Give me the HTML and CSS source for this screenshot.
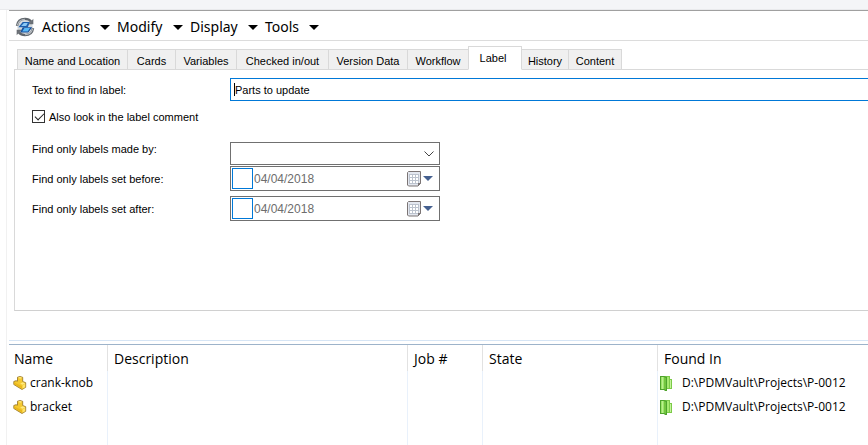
FILE: index.html
```html
<!DOCTYPE html>
<html lang="en">
<head>
<meta charset="utf-8">
<title>Search</title>
<link rel="stylesheet" href="styles.css">
</head>
<body>
<svg class="defs" aria-hidden="true">
  <symbol id="part" viewBox="0 0 14 14">
    <path d="M4.500 1.200 7 .5l2.700.8v4.200l3 1.200v4.600L9 13.500.8 8.500V5.500L3 4.700l1.500.5z" fill="#f5c930" stroke="#94711f" stroke-width=".8"/>
    <path d="M5 1.600 7 1l2.200.8-2 .9zM7.200 7.700l2.300-1.400 2.800 1-2.600 1.500z" fill="#ffea80"/>
    <path d="M9.600 9.600l2.600-1.500v3l-2.600 1.700z" fill="#ffe36a"/>
    <path d="M1.300 6.500 6 8.800l3 1.200v2.600L1.300 8.200z" fill="#e9b71c"/>
  </symbol>
  <symbol id="folder" viewBox="0 0 14 16">
    <path d="M5 1h6v3h2v10H5z" fill="#7cca48"/>
    <path d="M6 2h4v11H6z" fill="#a6ea70"/>
    <path d="M11 5h1v8h-1z" fill="#c4f49c"/>
    <path d="M1 1h4l3 1v14H6l-1-1H1z" fill="#4ea32c"/>
    <path d="M2 2h3v12H2z" fill="#9de368"/>
    <path d="M5 2l2 1v12l-2-1z" fill="#72c540"/>
    <path d="M3 2h1v12H3z" fill="#b9f08e"/>
  </symbol>
  <symbol id="calendar" viewBox="0 0 15 16">
    <path d="M1.500.5h12v12l-2.500 2.500H1.500l-1-1V1.500z" fill="#e3e7ef" stroke="#7b7474"/>
    <path d="M2 3h10v10H2z" fill="#bcc3ce"/>
    <path d="M3 4h2v2H3zM6 4h2v2H6zM9 4h2v2H9zM3 7h2v2H3zM6 7h2v2H6zM9 7h2v2H9zM3 10h2v2H3zM6 10h2v2H6zM9 10h2v2H9z" fill="#fff"/>
    <path d="M11 15v-3h3z" fill="#7b7474"/>
  </symbol>
</svg>

<div class="strip"></div>
<main class="window">
  <nav class="toolbar">
    <svg class="logo" viewBox="0 0 18 18" aria-hidden="true">
      <circle cx="9" cy="9" r="7" fill="#d3d8dc"/>
      <path d="M3 9.200 7 4.500h6.500l-2 4.700z" fill="#1c5fae"/>
      <path d="M5.500 8 8 5.500h3.500L10 8z" fill="#8ac8f5"/>
      <path d="M7 9.200h8.500L12 14H4.500z" fill="#164f9d"/>
      <path d="M8.500 10h5L11.500 13H6.500z" fill="#58b8f5"/>
      <path d="M1.800 8C2.300 4 5 1.700 9 1.700c2.500 0 4.300.8 5.500 2.300M16.200 10c-.5 4-3.200 6.300-7.200 6.300-2.500 0-4.300-.8-5.500-2.300" fill="none" stroke="#60666c" stroke-width="2.200"/>
      <path d="M2 7.500C3 4 5.500 2 9 2M16 10.500c-1 3.500-3.500 5.500-7 5.500" fill="none" stroke="#b9bec3" stroke-width="1"/>
      <path d="M16.500 1.500v5h-4.500zM1.500 16.500v-5H6z" fill="#6a6f75"/>
    </svg>
    <button class="menu menu-actions">Actions</button>
    <button class="menu menu-modify">Modify</button>
    <button class="menu menu-display">Display</button>
    <button class="menu">Tools</button>
  </nav>

  <section class="search">
    <div class="tabs" role="tablist">
      <button class="tab tab-name" role="tab">Name and Location</button>
      <button class="tab tab-cards" role="tab">Cards</button>
      <button class="tab tab-variables" role="tab">Variables</button>
      <button class="tab tab-checked" role="tab">Checked in/out</button>
      <button class="tab tab-version" role="tab">Version Data</button>
      <button class="tab tab-workflow" role="tab">Workflow</button>
      <button class="tab tab-label active" role="tab" aria-selected="true">Label</button>
      <button class="tab tab-history" role="tab">History</button>
      <button class="tab tab-content" role="tab">Content</button>
    </div>
    <form class="panel">
      <div class="row">
        <label class="caption" for="text">Text to find in label:</label>
        <div class="textbox"><span class="caret"></span><input id="text" type="text" value="Parts to update"></div>
      </div>
      <div class="check-row">
        <input class="tick" id="comment" type="checkbox" checked>
        <label for="comment">Also look in the label comment</label>
      </div>
      <div class="row select-row">
        <label class="caption" for="by">Find only labels made by:</label>
        <div class="select">
          <select id="by"><option></option></select>
          <svg class="chevron" viewBox="0 0 10 6" aria-hidden="true"><path d="M.5.5 5 5 9.500.5" fill="none" stroke="#444"/></svg>
        </div>
      </div>
      <div class="row date-row">
        <label class="caption" for="before">Find only labels set before:</label>
        <div class="date">
          <input class="enable" type="checkbox" aria-label="Use before date">
          <input class="value" id="before" type="text" value="04/04/2018">
          <button class="pick" type="button" aria-label="Pick before date"><svg><use href="#calendar"/></svg></button>
        </div>
      </div>
      <div class="row date-row">
        <label class="caption" for="after">Find only labels set after:</label>
        <div class="date">
          <input class="enable" type="checkbox" aria-label="Use after date">
          <input class="value" id="after" type="text" value="04/04/2018">
          <button class="pick" type="button" aria-label="Pick after date"><svg><use href="#calendar"/></svg></button>
        </div>
      </div>
    </form>
  </section>

  <div class="splitter"></div>
  <table class="results">
    <colgroup><col class="c-name"><col class="c-desc"><col class="c-job"><col class="c-state"><col></colgroup>
    <thead>
      <tr><th>Name</th><th>Description</th><th>Job #</th><th>State</th><th>Found In</th></tr>
    </thead>
    <tbody>
      <tr>
        <td><span class="item"><svg class="part"><use href="#part"/></svg>crank-knob</span></td><td></td><td></td><td></td>
        <td><span class="item place"><svg class="folder"><use href="#folder"/></svg>D:\PDMVault\Projects\P-0012</span></td>
      </tr>
      <tr>
        <td><span class="item"><svg class="part"><use href="#part"/></svg>bracket</span></td><td></td><td></td><td></td>
        <td><span class="item place"><svg class="folder"><use href="#folder"/></svg>D:\PDMVault\Projects\P-0012</span></td>
      </tr>
      <tr class="rest"><td></td><td></td><td></td><td></td><td></td></tr>
    </tbody>
  </table>
</main>
</body>
</html>
```
FILE: styles.css
```css
* { box-sizing: border-box; }

body {
  margin: 0;
  min-height: 100vh;
  display: flex;
  flex-direction: column;
  background: #fff;
  color: #000;
  font: 11px/14px "Liberation Sans", Arial, sans-serif;
  overflow: hidden;
}

button, input, select {
  font: inherit;
  color: inherit;
  margin: 0;
  padding: 0;
  border: 0;
  background: none;
  outline: none;
}

.defs { position: absolute; width: 0; height: 0; }

.strip {
  height: 10px;
  background: #f4f5f7;
  border-bottom: 1px solid #e9eaec;
}

.window {
  flex: 1;
  display: flex;
  flex-direction: column;
  margin-left: 6px;
  border-left: 1px solid #f1f1f1;
  padding-left: 2px;
}

.toolbar {
  display: flex;
  align-items: center;
  height: 31px;
  padding: 3px 0 0 6px;
  border-top: 1px solid #a0a0a0;
  border-bottom: 1px solid #dcdcdc;
  font: 14px/20px "Noto Sans", "Segoe UI", sans-serif;
}

.logo { width: 20px; height: 20px; margin-right: 7px; }

.menu {
  display: flex;
  align-items: center;
  justify-content: space-between;
  width: 68px;
  margin-right: 7px;
}
.menu::after {
  content: "";
  border: 5px solid transparent;
  border-top-color: #000;
  border-bottom: 0;
}
.menu-modify { width: 66px; }
.menu-display { width: 68px; }
.menu:last-child { width: 54px; }

.search { padding: 5px 0 0 5px; }

.tabs {
  display: flex;
  align-items: flex-end;
  height: 24px;
  padding-left: 3px;
  position: relative;
  z-index: 1;
}
.tab {
  height: 21px;
  padding-top: 3px;
  border: 1px solid #d9d9d9;
  border-right: 0;
  background: #f0f0f0;
  white-space: nowrap;
}
.tab-name { width: 110px; }
.tab-cards { width: 48px; }
.tab-variables { width: 61px; }
.tab-checked { width: 92px; }
.tab-version { width: 79px; }
.tab-workflow { width: 61px; }
.tab-label { width: 54px; }
.tab-history { width: 46px; border-left: 0; }
.tab-content { width: 54px; border-right: 1px solid #d9d9d9; }
.tab.active {
  height: 24px;
  padding: 0 4px 0 0;
  border-right: 1px solid #d9d9d9;
  border-bottom-color: #fff;
  background: #fff;
}

.panel {
  height: 242px;
  margin-top: -1px;
  padding: 8px 0 0 17px;
  border: 1px solid #d9d9d9;
  border-right: 0;
  border-bottom-color: #d0d0d0;
}

.row { display: flex; align-items: center; }
.caption { width: 198px; flex: none; }

.textbox {
  flex: 1;
  display: flex;
  align-items: center;
  height: 23px;
  padding-left: 3px;
  border: 1px solid #0078d7;
  border-right: 0;
}
.caret { width: 1px; height: 13px; background: #000; }
.textbox input { flex: 1; }

.check-row {
  display: flex;
  align-items: center;
  gap: 4px;
  height: 31px;
}
.tick {
  appearance: none;
  width: 13px;
  height: 13px;
  border: 1px solid #333;
  background: #fff;
}
.tick:checked::before {
  content: "";
  display: block;
  width: 8px;
  height: 4px;
  margin: 2px 0 0 2px;
  border: solid #222;
  border-width: 0 0 1px 1px;
  transform: rotate(-45deg);
}

.select-row { align-items: flex-start; margin-top: 10px; }
.select {
  display: flex;
  align-items: center;
  width: 210px;
  height: 23px;
  padding-right: 5px;
  border: 1px solid #707070;
}
.select select { appearance: none; flex: 1; }
.chevron { width: 10px; height: 6px; }

.date-row { margin-top: 1px; }
.date-row + .date-row { margin-top: 5px; }
.date {
  display: flex;
  align-items: center;
  width: 210px;
  height: 25px;
  padding: 0 6px 0 1px;
  border: 1px solid #707070;
}
.enable {
  appearance: none;
  width: 21px;
  height: 21px;
  border: 1px solid #0078d7;
}
.value {
  flex: 1;
  min-width: 0;
  padding-left: 1px;
  color: #6d6d6d;
  font-size: 12px;
}
.pick { display: flex; align-items: center; gap: 1px; }
.pick svg { width: 15px; height: 16px; }
.pick::after {
  content: "";
  border: 5px solid transparent;
  border-top-color: #45608f;
  border-bottom: 0;
}

.splitter {
  height: 5px;
  margin-top: 29px;
  border-top: 1px solid #d6e5f5;
  border-bottom: 1px solid #9db3ca;
}

.results {
  flex: 1;
  width: 100%;
  table-layout: fixed;
  border-collapse: separate;
  border-spacing: 0;
  font: 12px/16px "Open Sans", "Segoe UI", sans-serif;
}
.c-name { width: 99px; }
.c-desc { width: 300px; }
.c-job { width: 75px; }
.c-state { width: 175px; }
.results th {
  height: 26px;
  padding: 1px 0 0 6px;
  border-right: 1px solid #e2e2e2;
  font-size: 14px;
  font-weight: 400;
  text-align: left;
}
.results th:first-child { padding-left: 5px; }
.results td {
  height: 24px;
  padding: 0 0 0 4px;
  border-right: 1px solid #e9f1fb;
}
.results th:last-child, .results td:last-child { border-right: 0; }
.results td:last-child { padding-left: 1px; }
.results .rest td { height: auto; }
.item { display: flex; align-items: center; gap: 3px; white-space: nowrap; }
.place { gap: 9px; }
.part { width: 14px; height: 14px; }
.folder { width: 14px; height: 16px; }
```
